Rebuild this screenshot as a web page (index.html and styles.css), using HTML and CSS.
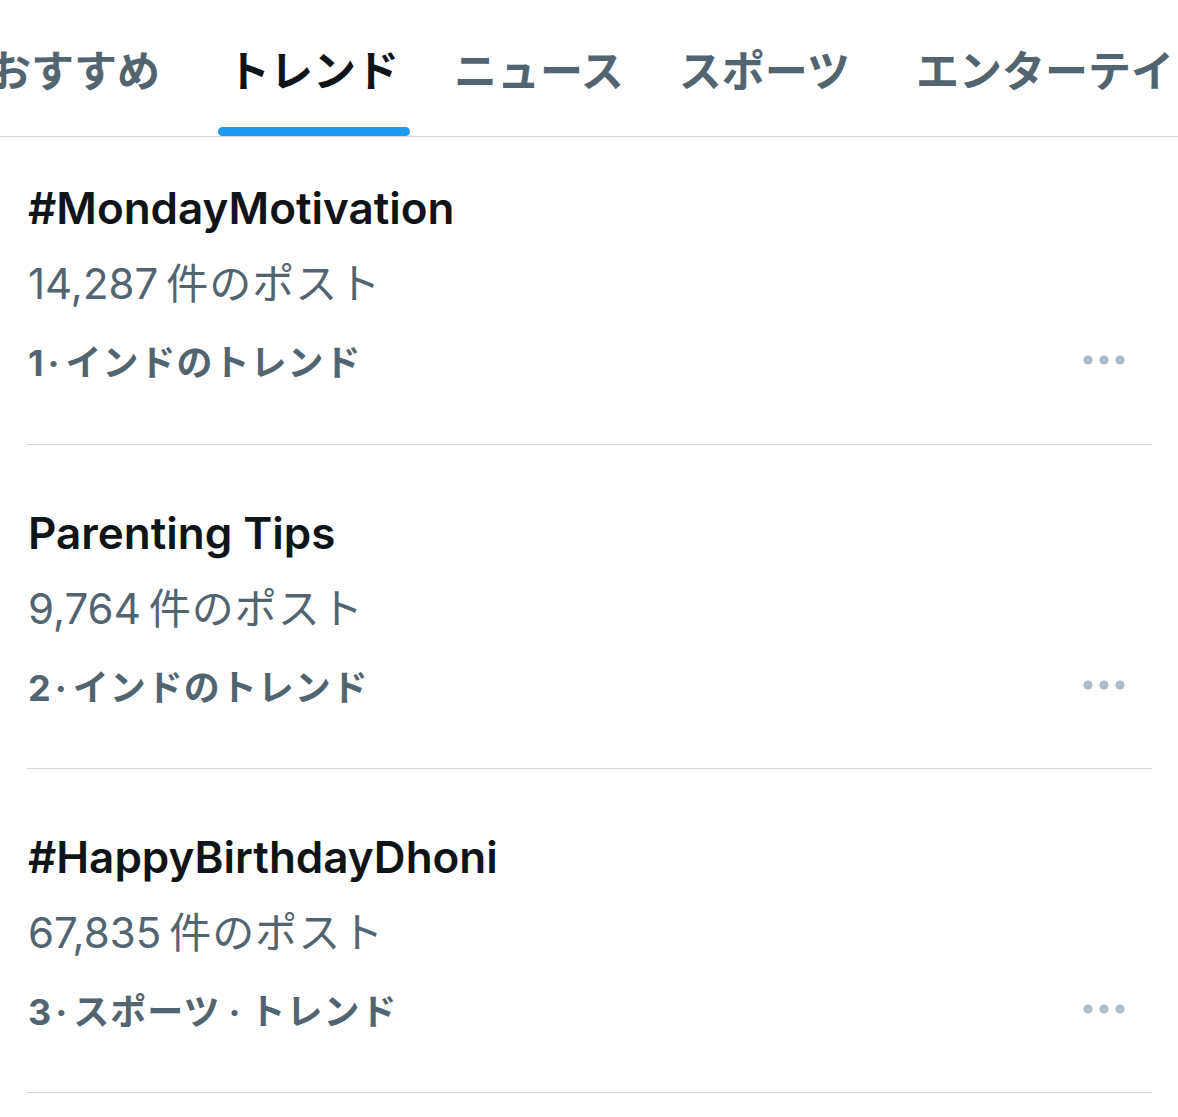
FILE: index.html
```html
<!DOCTYPE html>
<html lang="ja">
<head>
<meta charset="utf-8">
<title>トレンド</title>
<link rel="stylesheet" href="styles.css">
</head>
<body>
<nav class="tabs">
  <div class="tab-strip">
    <span class="tab">おすすめ</span>
    <span class="tab tab-active">トレンド</span>
    <span class="tab">ニュース</span>
    <span class="tab">スポーツ</span>
    <span class="tab tab-wide">エンターテイメント</span>
  </div>
</nav>
<main class="trends">
  <section class="trend">
    <div class="trend-title">#MondayMotivation</div>
    <div class="trend-count">14,287<span class="ken">件のポスト</span></div>
    <div class="trend-meta">
      <span>1<span class="sep">·</span>インドのトレンド</span>
      <svg class="more" width="42" height="10" viewBox="0 0 42 10"><circle cx="5" cy="5" r="4.6"/><circle cx="21" cy="5" r="4.6"/><circle cx="37" cy="5" r="4.6"/></svg>
    </div>
  </section>
  <section class="trend">
    <div class="trend-title">Parenting Tips</div>
    <div class="trend-count">9,764<span class="ken">件のポスト</span></div>
    <div class="trend-meta">
      <span>2<span class="sep">·</span>インドのトレンド</span>
      <svg class="more" width="42" height="10" viewBox="0 0 42 10"><circle cx="5" cy="5" r="4.6"/><circle cx="21" cy="5" r="4.6"/><circle cx="37" cy="5" r="4.6"/></svg>
    </div>
  </section>
  <section class="trend">
    <div class="trend-title">#HappyBirthdayDhoni</div>
    <div class="trend-count">67,835<span class="ken">件のポスト</span></div>
    <div class="trend-meta">
      <span>3<span class="sep">·</span>スポーツ<span class="sep sep-wide">·</span>トレンド</span>
      <svg class="more" width="42" height="10" viewBox="0 0 42 10"><circle cx="5" cy="5" r="4.6"/><circle cx="21" cy="5" r="4.6"/><circle cx="37" cy="5" r="4.6"/></svg>
    </div>
  </section>
</main>
</body>
</html>
```
FILE: styles.css
```css
* { box-sizing: border-box; }
html, body {
  margin: 0;
  padding: 0;
  background: #ffffff;
  overflow: hidden;
}
body {
  font-family: "Inter", "Noto Sans CJK JP", sans-serif;
  color: #0f1419;
  width: 1178px;
}
.tabs {
  height: 137px;
  border-bottom: 1px solid #cfd9de;
  overflow: hidden;
}
.tab-strip {
  display: flex;
  gap: 55px;
  margin-left: -12px;
  white-space: nowrap;
}
.tab {
  position: relative;
  font-family: "Noto Sans CJK JP", sans-serif;
  font-weight: 700;
  font-size: 43px;
  line-height: 136px;
  height: 136px;
  color: #536471;
}
.tab-active {
  color: #0f1419;
  margin-left: 12px;
}
.tab-wide {
  margin-left: 11px;
}
.tab-active::after {
  content: "";
  position: absolute;
  left: -9px;
  right: -11px;
  bottom: 0;
  height: 9px;
  border-radius: 5px;
  background: #1d9bf0;
}
.trend {
  margin: 0 26px 0 27px;
  padding: 50px 0 45px 1px;
  border-bottom: 1px solid #d0d6da;
}
.trend:first-child {
  padding-top: 33px;
  padding-bottom: 46px;
}
.trend-title {
  font-size: 44px;
  font-weight: 600;
  line-height: 76px;
  color: #0f1419;
}
.trend-count {
  font-size: 42px;
  font-weight: 400;
  line-height: 76px;
  color: #536471;
}
.ken {
  margin-left: 8px;
  letter-spacing: 1px;
}
.trend-meta {
  display: flex;
  justify-content: space-between;
  align-items: center;
  height: 76px;
  font-size: 36px;
  font-weight: 700;
  letter-spacing: 1px;
  color: #536471;
}
.sep {
  margin: 0 5px 0 3px;
}
.sep-wide {
  margin: 0 8px 0 8px;
}
.more {
  fill: #aebdc9;
  margin-right: 27px;
}
```
